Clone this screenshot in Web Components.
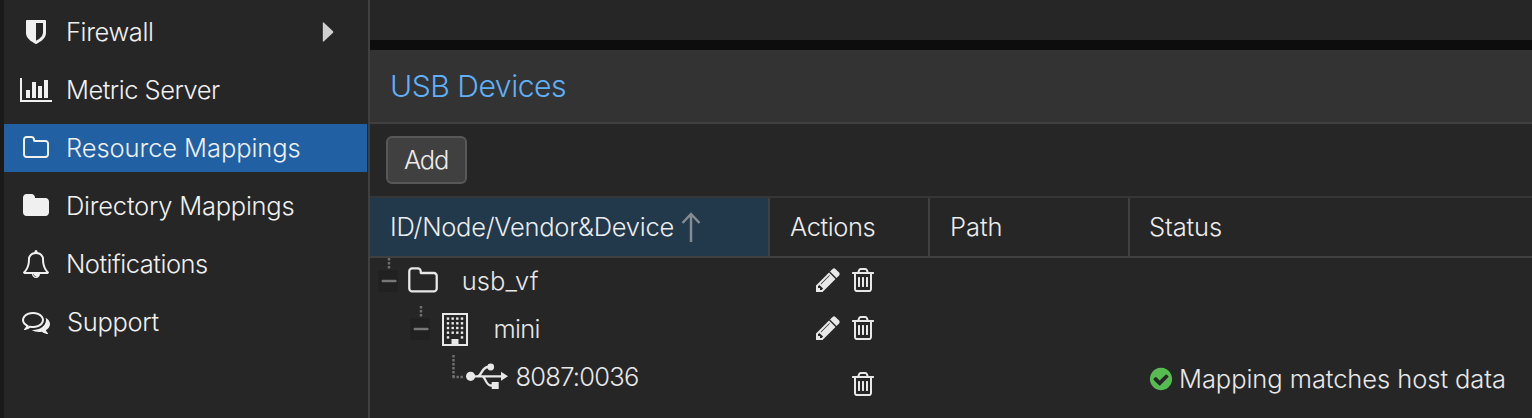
<!DOCTYPE html>
<html lang="en">
<head>
<meta charset="utf-8">
<title>Resource Mappings</title>
<style>
html,body{margin:0;height:100%;background:#262626;overflow:hidden}
body{font-family:Inter,"Liberation Sans",sans-serif;font-weight:300;font-size:25.5px;color:#ececec}
</style>
</head>
<body>
<pve-app></pve-app>
<script>
const ICONS = {
  shield: [1792, 'M1344 960v-640h-448v1137q119-63 213-137 235-184 235-360zm192-768v768q0 86-33.5 170.5t-83 150-118 127.5-126.5 103-121 77.5-89.5 49.5-42.5 20q-12 6-26 6t-26-6q-16-7-42.5-20t-89.5-49.5-121-77.5-126.5-103-118-127.5-83-150-33.5-170.5v-768q0-26 19-45t45-19h1152q26 0 45 19t19 45z'],
  chart: [2048, 'M640 896v512h-256v-512h256zm384-512v1024h-256v-1024h256zm1024 1152v128h-2048v-1536h128v1408h1920zm-640-896v768h-256v-768h256zm384-384v1152h-256v-1152h256z'],
  'folder-o': [1792, 'M1600 1312v-704q0-40-28-68t-68-28h-704q-40 0-68-28t-28-68v-64q0-40-28-68t-68-28h-320q-40 0-68 28t-28 68v960q0 40 28 68t68 28h1216q40 0 68-28t28-68zm128-704v704q0 92-66 158t-158 66h-1216q-92 0-158-66t-66-158v-960q0-92 66-158t158-66h320q92 0 158 66t66 158v32h672q92 0 158 66t66 158z'],
  folder: [1792, 'M1728 608v704q0 92-66 158t-158 66h-1216q-92 0-158-66t-66-158v-960q0-92 66-158t158-66h320q92 0 158 66t66 158v32h672q92 0 158 66t66 158z'],
  bell: [1792, 'M912 1696q0-16-16-16-59 0-101.5-42.5t-42.5-101.5q0-16-16-16t-16 16q0 73 51.5 124.5t124.5 51.5q16 0 16-16zm-666-288h1300q-266-300-266-832 0-51-24-105t-69-103-121.5-80.5-169.5-31.5-169.5 31.5-121.5 80.5-69 103-24 105q0 532-266 832zm1482 0q0 52-38 90t-90 38h-448q0 106-75 181t-181 75-181-75-75-181h-448q-52 0-90-38t-38-90q50-42 91-88t85-119.5 74.5-158.5 50-206 19.5-260q0-152 117-282.5t307-158.5q-8-19-8-39 0-40 28-68t68-28 68 28 28 68q0 20-8 39 190 28 307 158.5t117 282.5q0 139 19.5 260t50 206 74.5 158.5 85 119.5 91 88z'],
  comments: [1792, 'M704 384q-153 0-286 52t-211.5 141-78.5 191q0 82 53 158t149 132l97 56-35 84q34-20 62-39l44-31 53 10q78 14 153 14 153 0 286-52t211.5-141 78.5-191-78.5-191-211.5-141-286-52zm0-128q191 0 353.5 68.5t256.5 186.5 94 257-94 257-256.5 186.5-353.5 68.5q-86 0-176-16-124 88-278 128-36 9-86 16h-3q-11 0-20.5-8t-11.5-21q-1-3-1-6.5t.5-6.5 2-6l2.5-5 3.5-5.5 4-5 4.5-5 4-4.5q5-6 23-25t26-29.5 22.5-29 25-38.5 20.5-44q-124-72-195-177t-71-224q0-139 94-257t256.5-186.5 353.5-68.5zm822 1169q10 24 20.5 44t25 38.5 22.5 29 26 29.5 23 25q1 1 4 4.5t4.5 5 4 5 3.5 5.5l2.5 5 2 6 .5 6.5-1 6.5q-3 14-13 22t-22 7q-50-7-86-16-154-40-278-128-90 16-176 16-271 0-472-132 58 4 88 4 161 0 309-45t264-129q125-92 192-212t67-254q0-77-23-152 129 71 204 178t75 230q0 120-71 224.5t-195 176.5z'],
  trash: [1792, 'M704 736v576q0 14-9 23t-23 9h-64q-14 0-23-9t-9-23v-576q0-14 9-23t23-9h64q14 0 23 9t9 23zm256 0v576q0 14-9 23t-23 9h-64q-14 0-23-9t-9-23v-576q0-14 9-23t23-9h64q14 0 23 9t9 23zm256 0v576q0 14-9 23t-23 9h-64q-14 0-23-9t-9-23v-576q0-14 9-23t23-9h64q14 0 23 9t9 23zm128 724v-948h-896v948q0 22 7 40.5t14.5 27 10.5 8.5h832q3 0 10.5-8.5t14.5-27 7-40.5zm-672-1076h448l-48-117q-7-9-17-11h-317q-10 2-17 11zm928 32v64q0 14-9 23t-23 9h-96v948q0 83-47 143.5t-113 60.5h-832q-66 0-113-58.5t-47-141.5v-952h-96q-14 0-23-9t-9-23v-64q0-14 9-23t23-9h309l70-167q15-37 54-63t79-26h320q40 0 79 26t54 63l70 167h309q14 0 23 9t9 23z'],
  pencil: [1792, 'M491 1536l91-91-235-235-91 91v107h128v128h107zm523-928q0-22-22-22-10 0-17 7l-542 542q-7 7-7 17 0 22 22 22 10 0 17-7l542-542q7-7 7-17zm-54-192l416 416-832 832h-416v-416zm683 96q0 53-37 90l-166 166-416-416 166-165q36-38 90-38 53 0 91 38l235 234q37 39 37 91z'],
  check: [1792, 'M1412 734q0-28-18-46l-91-90q-19-19-45-19t-45 19l-408 407-226-226q-19-19-45-19t-45 19l-91 90q-18 18-18 46 0 27 18 45l362 362q19 19 45 19 27 0 46-19l543-543q18-18 18-45zm252 162q0 209-103 385.5t-279.5 279.5-385.5 103-385.5-103-279.5-279.5-103-385.5 103-385.5 279.5-279.5 385.5-103 385.5 103 279.5 279.5 103 385.5z']
};
// Icons whose drawing is more than one filled path: [width, height, markup]
const DRAWN = {
  building: [26, 33, '<rect x="1" y="1" width="24" height="31" fill="none" stroke="currentColor" stroke-width="2"/>' +
    [5.2, 9.9, 14.6, 19.3, 24].map((y, r) => [4.8, 9.5, 14.1, 18.8].map((x, c) =>
      r === 4 && (c === 1 || c === 2) ? '' : `<rect x="${x}" y="${y - .8}" width="2.4" height="2.4" fill="currentColor"/>`).join('')).join('') +
    '<rect x="9.5" y="26" width="7" height="6" fill="currentColor"/>'],
  usb: [42, 27, '<g fill="currentColor"><circle cx="4.6" cy="13.3" r="4.6"/><circle cx="24.7" cy="4" r="3.4"/><rect x="25.7" y="19" width="7" height="7"/><path d="M35 8.8l7 4.5-7 4.5z"/></g><g fill="none" stroke="currentColor" stroke-width="2.3"><path d="M4 13.3h32M11 13.3c5 0 4.500-9.300 11-9.300h3M16 13.300c3.500 0 3.500 9.200 9 9.200h2"/></g>'],
  sort: [20, 32, '<path d="M10 31V3M1.500 12L10 3l8.500 9" fill="none" stroke="currentColor" stroke-width="2.500"/>'],
  caret: [12, 20, '<path d="M.8 .8Q1 0 2 .7L11 9.200Q11.700 10 11 10.800L2 19.300Q1 20 .8 19.200z" fill="currentColor"/>'],
  expander: [20, 34, '<path d="M11 0v12" stroke="#707070" stroke-width="2.400" stroke-dasharray="2.400 1.600"/><rect y="12" width="20" height="22" fill="#212121"/><path d="M4.800 23h12.600" stroke="#777" stroke-width="2.400" stroke-linecap="round"/>'],
  elbow: [12, 25, '<path d="M1.500 1v22" stroke="#707070" stroke-width="2.400" stroke-dasharray="2.400 1.600"/><path d="M.5 23h11" stroke="#707070" stroke-width="2.400" stroke-dasharray="2.400 1.600"/>']
};

function define(name, html, setup) {
  const t = document.createElement('template');
  t.innerHTML = html;
  customElements.define(name, class extends HTMLElement {
    connectedCallback() {
      if (this.shadowRoot) return;
      this.attachShadow({mode: 'open'}).append(t.content.cloneNode(true));
      if (setup) setup(this, this.shadowRoot);
    }
  });
}

define('pve-icon', '<style>:host{display:block;flex:none;line-height:0}svg{display:block}</style><div></div>', (el, root) => {
  const name = el.getAttribute('name'), d = DRAWN[name];
  let w, h, box, body;
  if (d) { [w, h, body] = d; box = `0 0 ${w} ${h}`; }
  else {
    const [vw, path] = ICONS[name];
    h = +(el.getAttribute('size') || 28); w = h * vw / 1792;
    box = `0 0 ${vw} 1792`; body = `<path d="${path}" fill="currentColor"/>`;
  }
  root.querySelector('div').innerHTML = `<svg width="${w}" height="${h}" viewBox="${box}">${body}</svg>`;
});

// A single-line label tracked so that its glyphs span exactly `span` pixels.
define('pve-label', '<style>:host{display:block;flex:none;white-space:nowrap;line-height:36px}span{display:block}</style><span></span>', (el, root) => {
  const s = root.querySelector('span'), text = el.getAttribute('text'), cs = getComputedStyle(el);
  const ctx = document.createElement('canvas').getContext('2d');
  ctx.font = `${cs.fontWeight} ${cs.fontSize} ${cs.fontFamily}`;
  const m = ctx.measureText(text), span = +el.getAttribute('span');
  s.textContent = text;
  s.style.letterSpacing = (span - m.actualBoundingBoxRight - m.actualBoundingBoxLeft) / (text.length - 1) + 'px';
  s.style.marginLeft = m.actualBoundingBoxLeft + 'px';
  el.style.width = span + 'px';
});

define('pve-nav-item', `<style>
:host{display:flex;align-items:center;height:48px;width:363px;box-sizing:border-box;color:#f0f0f0}
:host([selected]){background:#2161a3}
.icon{width:32px;margin-left:16px;display:flex;justify-content:center}
.text{margin-left:16px}
.more{margin-left:auto;padding-right:33px;color:#cfcfcf}
</style><div class="icon"></div><div class="text"></div><div class="more"><slot></slot></div>`, (el, root) => {
  const i = document.createElement('pve-icon'); i.setAttribute('name', el.getAttribute('icon'));
  root.querySelector('.icon').append(i);
  const l = document.createElement('pve-label');
  l.setAttribute('text', el.getAttribute('text')); l.setAttribute('span', el.getAttribute('span'));
  root.querySelector('.text').append(l);
});
</script>
<script>
customElements.define('pve-nav', class extends HTMLElement {
  connectedCallback() {
    this.attachShadow({mode: 'open'}).innerHTML = `<style>
:host{display:flex;flex-direction:column;gap:10px;padding-top:8px;box-sizing:border-box;width:370px;height:418px;background:#262626;border-left:4px solid #1a1a1a;border-right:2px solid #404040}
</style>
<pve-nav-item icon="shield" text="Firewall" span="84"></pve-nav-item>
<pve-nav-item icon="chart" text="Metric Server" span="152"></pve-nav-item>
<pve-nav-item selected icon="folder-o" text="Resource Mappings" span="231.5"></pve-nav-item>
<pve-nav-item icon="folder" text="Directory Mappings" span="225.5"></pve-nav-item>
<pve-nav-item icon="bell" text="Notifications" span="139"></pve-nav-item>
<pve-nav-item icon="comments" text="Support" span="91.5" style="--shift:-1px"></pve-nav-item>`;
    const caret = document.createElement('pve-icon');
    caret.setAttribute('name', 'caret');
    this.shadowRoot.querySelector('pve-nav-item').append(caret);
  }
});
customElements.define('pve-tree-grid', class extends HTMLElement {
  connectedCallback() {
    this.attachShadow({mode: 'open'}).innerHTML = `<style>
:host{display:block}
.head,.row{display:grid;grid-template-columns:400px 160px 200px 1fr}
.head{height:58px;border-top:2px solid #363636;border-bottom:2px solid #404040}
.head>div{display:flex;align-items:center;padding-left:20px;border-right:2px solid #404040}
.head>div:nth-child(3){padding-left:22px}
.head>div:last-child{border-right:0}
.head .sorted{background:#22384b;padding-left:22px}
.sorted pve-icon{margin-left:7.500px;color:#858b90}
.row{height:48px}
.row>div{display:flex;align-items:flex-start;color:#e8e8e8}
.tree pve-label{margin-top:5px}
</style>
<div class="head">
<div class="sorted"><pve-label text="ID/Node/Vendor&amp;Device" span="281.5"></pve-label><pve-icon name="sort"></pve-icon></div>
<div><pve-label text="Actions" span="84.500"></pve-label></div>
<div><pve-label text="Path" span="48.500"></pve-label></div>
<div><pve-label text="Status" span="71"></pve-label></div>
</div>
<div class="row">
<div class="tree" style="padding-left:8px"><pve-icon name="expander"></pve-icon><pve-icon name="folder-o" size="32" style="margin:7.300px 0 0 8.700px"></pve-icon><pve-label text="usb_vf" span="75" style="margin-left:25px"></pve-label></div>
<div style="padding:8px 0 0 44px;gap:7px"><pve-icon name="pencil"></pve-icon><pve-icon name="trash"></pve-icon></div>
</div>
<div class="row">
<div class="tree" style="padding-left:40px"><pve-icon name="expander"></pve-icon><pve-icon name="building" style="margin:7px 0 0 12px"></pve-icon><pve-label text="mini" span="44" style="margin-left:27.500px"></pve-label></div>
<div style="padding:8px 0 0 44px;gap:7px"><pve-icon name="pencil"></pve-icon><pve-icon name="trash"></pve-icon></div>
</div>
<div class="row" style="height:64px">
<div class="tree" style="padding-left:81.500px"><pve-icon name="elbow"></pve-icon><pve-icon name="usb" style="margin:9px 0 0 2.500px"></pve-icon><pve-label text="8087:0036" span="121.500" style="margin-left:8.500px"></pve-label></div>
<div style="padding:16px 0 0 79px"><pve-icon name="trash"></pve-icon></div>
<div></div>
<div style="padding-left:18px"><pve-icon name="check" size="26" style="color:#56bc52;margin-top:11.500px"></pve-icon><pve-label text="Mapping matches host data" span="323" style="margin:7px 0 0 7px"></pve-label></div>
</div>`;
  }
});
customElements.define('pve-button', class extends HTMLElement {
  connectedCallback() {
    this.attachShadow({mode: 'open'}).innerHTML = `<style>
:host{display:flex;box-sizing:border-box;width:81px;height:48px;padding:4px 0 0 16px;border:2px solid #585858;border-radius:6px;background:#404040}
</style><slot></slot>`;
  }
});
customElements.define('pve-app', class extends HTMLElement {
  connectedCallback() {
    this.attachShadow({mode: 'open'}).innerHTML = `<style>
:host{display:flex;width:1532px;height:418px;overflow:hidden;background:#262626}
main{flex:1;min-width:0}
.above{height:40px;border-bottom:10px solid #0d0d0d}
.title{height:72px;background:#333;border-bottom:2px solid #404040;color:#5fb0f8;font-size:30.200px;padding-left:22px;display:flex;align-items:center}
.bar{height:72px;box-sizing:border-box;padding:12px 16px}
</style>
<pve-nav></pve-nav>
<main><div class="above"></div>
<div class="title"><pve-label text="USB Devices" span="173"></pve-label></div>
<div class="bar"><pve-button><pve-label text="Add" span="44"></pve-label></pve-button></div>
<pve-tree-grid></pve-tree-grid></main>`;
  }
});
</script>
</body>
</html>
